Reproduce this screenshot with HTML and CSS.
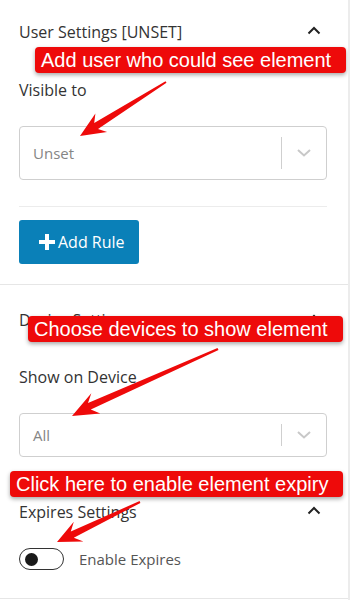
FILE: index.html
```html
<!DOCTYPE html>
<html>
<head>
<meta charset="utf-8">
<link rel="stylesheet" href="styles.css">
</head>
<body>
<div class="page">
  <section class="section s1">
    <div class="head">
      <span class="title">User Settings [UNSET]</span>
      <svg class="chev" width="14" height="9" viewBox="0 0 14 9"><path d="M1.5 7.5 L7 2 L12.5 7.5" fill="none" stroke="#222" stroke-width="2"/></svg>
    </div>
    <div class="label l1">Visible to</div>
    <div class="select sel1">
      <span class="value">Unset</span>
      <span class="sep"></span>
      <svg class="down" width="16" height="10" viewBox="0 0 16 10"><path d="M2 2 L8 7.5 L14 2" fill="none" stroke="#c8c8c8" stroke-width="2"/></svg>
    </div>
    <div class="divider"></div>
    <button class="btn"><svg class="plus" width="16" height="16" viewBox="0 0 16 16"><path d="M6 0h4v6h6v4h-6v6h-4v-6h-6v-4h6z" fill="#fff"/></svg>Add Rule</button>
  </section>
  <section class="section s2">
    <div class="head">
      <span class="title">Device Settings</span>
      <svg class="chev" width="14" height="9" viewBox="0 0 14 9"><path d="M1.5 7.5 L7 2 L12.5 7.5" fill="none" stroke="#222" stroke-width="2"/></svg>
    </div>
    <div class="label l2">Show on Device</div>
    <div class="select sel2">
      <span class="value">All</span>
      <span class="sep"></span>
      <svg class="down" width="16" height="10" viewBox="0 0 16 10"><path d="M2 2 L8 7.5 L14 2" fill="none" stroke="#c8c8c8" stroke-width="2"/></svg>
    </div>
  </section>
  <section class="section s3">
    <div class="head">
      <span class="title">Expires Settings</span>
      <svg class="chev" width="14" height="9" viewBox="0 0 14 9"><path d="M1.5 7.5 L7 2 L12.5 7.5" fill="none" stroke="#222" stroke-width="2"/></svg>
    </div>
    <div class="toggle-row">
      <span class="toggle"><span class="knob"></span></span>
      <span class="toggle-label">Enable Expires</span>
    </div>
  </section>

  <div class="callout c1">Add user who could see element</div>
  <div class="callout c2">Choose devices to show element</div>
  <div class="callout c3">Click here to enable element expiry</div>

  <svg class="arrows" width="350" height="600" viewBox="0 0 350 600">
    <polygon fill="#ee0a0a" points="166.5,82.8 98.0,128.9 107.1,132.0 80,136 95.4,113.4 94.2,122.9 165.5,81.2"/>
    <polygon fill="#ee0a0a" points="218.5,350.1 90.8,409.5 100.3,413.4 72,416 91.3,393.3 88.0,403.1 217.5,347.9"/>
    <polygon fill="#ee0a0a" points="140.4,502.9 73.8,537.8 83.4,541.5 57,542 73.8,521.7 70.8,531.4 139.6,501.1"/>
  </svg>
</div>
</body>
</html>
```

FILE: styles.css
```css
html, body {
  margin: 0;
  padding: 0;
  background: #fff;
}
body {
  font-family: "Open Sans", "DejaVu Sans", sans-serif;
  color: #333;
}
.page {
  position: relative;
  width: 348px;
  height: 600px;
  border-right: 2px solid #ececec;
  overflow: hidden;
}
.section {
  padding: 0 21px 0 19px;
  display: flex;
  flex-direction: column;
  box-sizing: border-box;
}
.s1 {
  padding-top: 22px;
  height: 285px;
  border-bottom: 1px solid #e6e6e6;
}
.s2 {
  padding-top: 25px;
}
.s3 {
  padding-top: 45px;
  height: 142px;
  border-bottom: 1px solid #e6e6e6;
}
.head {
  display: flex;
  justify-content: space-between;
  align-items: center;
  height: 20px;
}
.title {
  font-size: 16px;
  line-height: 20px;
}
.chev { margin-right: 6px; margin-top: -4px; }
.label {
  font-size: 16px;
  line-height: 20px;
}
.l1 { margin-top: 38px; }
.l2 { margin-top: 37px; }
.select {
  display: flex;
  align-items: center;
  border: 1px solid #cfcfcf;
  border-radius: 4px;
  box-sizing: border-box;
  padding-left: 13px;
}
.sel1 { margin-top: 26px; height: 54px; }
.sel2 { margin-top: 26px; height: 44px; }
.value {
  flex: 1;
  font-size: 15px;
  color: #858585;
}
.sep {
  width: 1px;
  align-self: stretch;
  margin: 10px 0;
  background: #cfcfcf;
}
.down { margin: 0 14px 0 14px; }
.divider {
  margin-top: 26px;
  height: 1px;
  background: #ececec;
}
.btn {
  margin-top: 13px;
  align-self: flex-start;
  display: flex;
  align-items: center;
  gap: 3px;
  width: 120px;
  height: 44px;
  padding: 0 0 0 20px;
  border: none;
  border-radius: 3px;
  background: #0a80b8;
  color: #fff;
  font-family: "Open Sans", "DejaVu Sans", sans-serif;
  font-size: 16px;
}
.toggle-row {
  margin-top: 26px;
  display: flex;
  align-items: center;
  gap: 15px;
}
.toggle {
  width: 45px;
  height: 22px;
  box-sizing: border-box;
  border: 1.5px solid #333;
  border-radius: 11px;
  display: flex;
  align-items: center;
  padding-left: 5px;
}
.knob {
  width: 13px;
  height: 13px;
  border-radius: 50%;
  background: #1a1a1a;
}
.toggle-label {
  font-size: 15px;
  color: #555;
}
.callout {
  position: absolute;
  height: 26px;
  box-sizing: border-box;
  padding: 0 6px;
  background: #ee0a0a;
  color: #fff;
  font-family: "Liberation Sans", Arial, sans-serif;
  font-size: 20px;
  line-height: 26px;
  border-radius: 4px;
  box-shadow: 0 2px 4px rgba(0,0,0,0.35);
  white-space: nowrap;
  overflow: hidden;
}
.c1 { left: 35px; top: 47px; width: 311px; }
.c2 { left: 28px; top: 316px; width: 315px; }
.c3 { left: 10px; top: 471px; width: 333px; }
.arrows {
  position: absolute;
  left: 0;
  top: 0;
  pointer-events: none;
}
```
